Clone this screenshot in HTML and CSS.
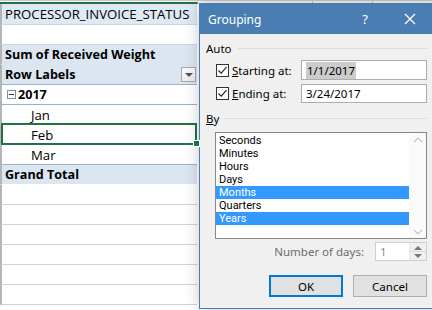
FILE: index.html
```html
<!DOCTYPE html>
<html lang="en">
<head>
  <meta charset="UTF-8">
  <title>Grouping</title>
  <link rel="stylesheet" href="styles.css">
</head>
<body>
  <main class="sheet">
    <div class="sheet__cols">
      <span class="col col--a"></span>
      <span class="col col--b"></span>
      <span class="col col--c"></span>
      <span class="col col--d"></span>
    </div>
    <div class="row row--field">PROCESSOR_INVOICE_STATUS</div>
    <div class="row"></div>
    <div class="row row--head row--joined">Sum of Received Weight</div>
    <div class="row row--head row--blue">Row Labels <span class="filter-btn"></span></div>
    <div class="row row--bold row--blue"><span class="collapse"></span>2017</div>
    <div class="row row--item row--plain">Jan</div>
    <div class="row row--item row--plain row--active">Feb</div>
    <div class="row row--item row--blue">Mar</div>
    <div class="row row--head row--total">Grand Total</div>
    <div class="row"></div>
    <div class="row"></div>
    <div class="row"></div>
    <div class="row"></div>
    <div class="row"></div>
    <div class="row"></div>
  </main>

  <section class="dialog">
    <header class="dialog__title">
      <span class="dialog__name">Grouping</span>
      <span class="dialog__help">?</span>
      <span class="dialog__close">
        <svg width="12" height="12" viewBox="0 0 12 12"><path d="M1 1 L11 11 M11 1 L1 11" stroke="#fff" stroke-width="1.3"/></svg>
      </span>
    </header>
    <div class="dialog__body">
      <div class="group">
        <span class="group__label">Auto</span>
        <span class="group__line"></span>
      </div>
      <div class="field">
        <span class="check"><svg width="11" height="11" viewBox="0 0 11 11"><path d="M1.5 5.5 L4.2 8.2 L9.5 2.2" fill="none" stroke="#222" stroke-width="1.2"/></svg></span>
        <span class="field__label"><u>S</u>tarting at:</span>
        <span class="input"><span class="input__sel">1/1/2017</span></span>
      </div>
      <div class="field field--second">
        <span class="check"><svg width="11" height="11" viewBox="0 0 11 11"><path d="M1.5 5.5 L4.2 8.2 L9.5 2.2" fill="none" stroke="#222" stroke-width="1.2"/></svg></span>
        <span class="field__label"><u>E</u>nding at:</span>
        <span class="input">3/24/2017</span>
      </div>
      <div class="group group--by">
        <span class="group__label"><u>B</u>y</span>
        <span class="group__line"></span>
      </div>
      <div class="listbox">
        <ul class="listbox__items">
          <li>Seconds</li>
          <li>Minutes</li>
          <li>Hours</li>
          <li>Days</li>
          <li class="selected">Months</li>
          <li>Quarters</li>
          <li class="selected">Years</li>
        </ul>
        <div class="scroll">
          <svg width="10" height="6" viewBox="0 0 10 6"><path d="M1 5 L5 1 L9 5" fill="none" stroke="#c4c4c4" stroke-width="1.2"/></svg>
          <svg width="10" height="6" viewBox="0 0 10 6"><path d="M1 1 L5 5 L9 1" fill="none" stroke="#c4c4c4" stroke-width="1.2"/></svg>
        </div>
      </div>
      <div class="days">
        <span class="days__label">Number of days:</span>
        <span class="spin">
          <span class="spin__value">1</span>
          <span class="spin__btns">
            <span class="spin__up"></span>
            <span class="spin__down"></span>
          </span>
        </span>
      </div>
      <div class="buttons">
        <button class="btn btn--default">OK</button>
        <button class="btn">Cancel</button>
      </div>
    </div>
  </section>
</body>
</html>
```

FILE: styles.css
```css
:root {
  --pivot-blue: #dce6f1;
  --pivot-line: #95b3d7;
  --grid: #d4d4d4;
  --excel-green: #217346;
  --title-blue: #4a7eb3;
  --dialog-bg: #f0f0f0;
  --select-blue: #3399ff;
}
html, body {
  margin: 0;
  padding: 0;
}
body {
  position: relative;
  width: 432px;
  height: 310px;
  overflow: hidden;
  background: #fff;
}

/* spreadsheet behind the dialog */
.sheet {
  font-family: 'Open Sans', sans-serif;
  font-size: 13.2px;
  color: #000;
}
.sheet__cols {
  display: flex;
  height: 4px;
  box-sizing: border-box;
  background: #f7f7f7;
  border-top: 1px solid #c8c8c8;
}
.col {
  box-sizing: border-box;
  border-right: 1px solid #c8c8c8;
}
.col--a { width: 198px; border-bottom: 2px solid var(--excel-green); }
.col--b { width: 115px; }
.col--c { width: 60px; }
.col--d { flex: 1; border-right: 0; }
.row {
  position: relative;
  display: flex;
  align-items: center;
  box-sizing: border-box;
  width: 197px;
  height: 20px;
  padding-left: 3px;
  border-left: 2px solid #b4b4b4;
  border-bottom: 1px solid var(--grid);
  white-space: nowrap;
}
.row--field {
  height: 21px;
  background: #dfe9f4;
  border-bottom-color: #c9d7e8;
}
.row--head {
  font-size: 12.6px;
  font-weight: 700;
  background: var(--pivot-blue);
}
.row--joined {
  border-bottom-color: var(--pivot-blue);
}
.row--bold {
  font-size: 12.6px;
  font-weight: 700;
}
.row--blue {
  border-bottom-color: var(--pivot-line);
}
.row--plain {
  border-bottom-color: #fff;
}
.row--item {
  padding-left: 29px;
}
.row--total {
  border-bottom-color: #fff;
}
.row--active::after {
  content: '';
  position: absolute;
  left: -1px;
  top: -2px;
  right: 0;
  bottom: -1px;
  border: 2px solid var(--excel-green);
}
.row--active::before {
  content: '';
  position: absolute;
  right: -3px;
  bottom: -3px;
  width: 5px;
  height: 5px;
  background: var(--excel-green);
  border: 1px solid #fff;
  z-index: 1;
}
.filter-btn {
  position: absolute;
  right: 1px;
  top: 2px;
  width: 15px;
  height: 15px;
  box-sizing: border-box;
  border: 1px solid #a8a8a8;
  background: linear-gradient(#fafafa, #ececec);
}
.filter-btn::after {
  content: '';
  position: absolute;
  left: 3px;
  top: 5px;
  border-left: 4px solid transparent;
  border-right: 4px solid transparent;
  border-top: 4px solid #555;
}
.collapse {
  position: relative;
  width: 7px;
  height: 7px;
  margin: 0 2px 0 2px;
  border: 1px solid #7c8fa6;
  background: #fff;
}
.collapse::after {
  content: '';
  position: absolute;
  left: 1px;
  right: 1px;
  top: 3px;
  height: 1px;
  background: #333;
}

/* grouping dialog */
.dialog {
  position: absolute;
  left: 199px;
  top: 3px;
  width: 240px;
  height: 306px;
  box-sizing: border-box;
  border: 1px solid var(--title-blue);
  background: var(--dialog-bg);
  box-shadow: 0 0 14px rgba(0, 0, 0, 0.22);
  font-family: 'Noto Sans', sans-serif;
  font-size: 11.5px;
  color: #000;
}
.dialog__title {
  display: flex;
  align-items: center;
  height: 30px;
  background: var(--title-blue);
  color: #fff;
  font-size: 12px;
}
.dialog__name {
  flex: 1;
  padding-left: 8px;
}
.dialog__help {
  width: 20px;
  text-align: center;
  font-size: 13px;
}
.dialog__close {
  display: flex;
  justify-content: center;
  width: 20px;
  margin-left: 25px;
  margin-right: 18px;
}
.dialog__body {
  padding: 6px 11px 0 6px;
}
.group {
  display: flex;
  align-items: center;
  height: 16px;
}
.group__label {
  margin-right: 6px;
}
.group__line {
  flex: 1;
  height: 1px;
  background: #dcdcdc;
}
.field {
  display: flex;
  align-items: center;
  margin-top: 4px;
  padding-left: 10px;
  height: 20px;
}
.field--second {
  margin-top: 4px;
  height: 19px;
}
.check {
  display: flex;
  align-items: center;
  justify-content: center;
  width: 13px;
  height: 13px;
  box-sizing: border-box;
  border: 1px solid #333;
  background: #fff;
  margin-right: 3px;
}
.field__label {
  width: 69px;
}
.input {
  display: flex;
  align-items: center;
  flex: 1;
  height: 100%;
  box-sizing: border-box;
  padding-left: 4px;
  border: 1px solid #adadad;
  background: #fff;
}
.input__sel {
  background: #cccccc;
  padding: 1px 1px;
}
.group--by {
  margin-top: 7px;
}
.listbox {
  display: flex;
  margin: 6px 0 0 9px;
  height: 107px;
  box-sizing: border-box;
  border: 1px solid #828790;
  background: #fff;
}
.listbox__items {
  flex: 1;
  list-style: none;
  margin: 0;
  padding: 1px 0 0 0;
  font-family: Roboto, sans-serif;
  font-size: 11px;
}
.listbox__items li {
  height: 13px;
  line-height: 13px;
  padding-left: 3px;
}
.listbox__items .selected {
  background: var(--select-blue);
  color: #fff;
}
.scroll {
  display: flex;
  flex-direction: column;
  justify-content: space-between;
  align-items: center;
  width: 17px;
  padding: 4px 0 3px;
  background: #fafafa;
}
.days {
  display: flex;
  justify-content: flex-end;
  align-items: center;
  margin-top: 3px;
  height: 19px;
  color: #6d6d6d;
}
.days__label {
  margin-right: 11px;
}
.spin {
  display: flex;
  width: 52px;
  height: 100%;
  box-sizing: border-box;
  border: 1px solid #cfcfcf;
  background: #fff;
}
.spin__value {
  flex: 1;
  padding-left: 4px;
  line-height: 17px;
  color: #8a8a8a;
}
.spin__btns {
  display: flex;
  flex-direction: column;
  width: 16px;
  border-left: 1px solid #e6e6e6;
  background: #f0f0f0;
}
.spin__up, .spin__down {
  position: relative;
  flex: 1;
}
.spin__up { border-bottom: 1px solid #d8d8d8; }
.spin__up::after, .spin__down::after {
  content: '';
  position: absolute;
  left: 4px;
  top: 3px;
  border-left: 4px solid transparent;
  border-right: 4px solid transparent;
}
.spin__up::after { border-bottom: 4px solid #777; }
.spin__down::after { border-top: 4px solid #777; top: 2px; }
.buttons {
  display: flex;
  justify-content: flex-end;
  gap: 10px;
  margin-top: 14px;
}
.btn {
  width: 74px;
  height: 22px;
  box-sizing: border-box;
  border: 1px solid #adadad;
  background: #e1e1e1;
  font-family: 'Noto Sans', sans-serif;
  font-size: 11.5px;
  color: #000;
  padding: 0;
}
.btn--default {
  border: 2px solid #0078d7;
}
```
